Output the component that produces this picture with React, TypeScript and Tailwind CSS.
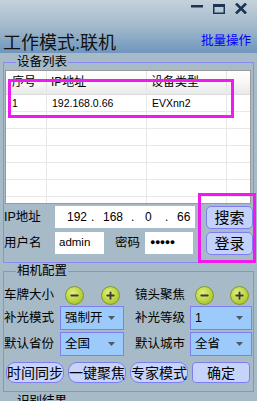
import { Minus, Plus } from "lucide-react"

function CircleBtn({ kind }: { kind: "minus" | "plus" }) {
  return (
    <div className="w-[19px] h-[19px] rounded-full border border-[#7f9a22] bg-[radial-gradient(circle_at_40%_35%,#e4f07c,#b6d13a_60%,#94b322)] flex items-center justify-center shrink-0">
      {kind === "minus" ? (
        <Minus className="w-[11px] h-[11px] text-[#3a3a3a]" strokeWidth={4} />
      ) : (
        <Plus className="w-[11px] h-[11px] text-[#3a3a3a]" strokeWidth={4} />
      )}
    </div>
  )
}

function Select({ value, className }: { value: string; className: string }) {
  return (
    <div
      className={`h-[24px] bg-[#9ccbfb] border border-[#7e7ef0] flex items-center justify-between pl-[4px] pr-[8px] text-[12.5px] text-black ${className}`}
    >
      <span>{value}</span>
      <svg width="7" height="4" viewBox="0 0 7 4">
        <path d="M0 0h7L3.5 4z" fill="#4a5a6a" />
      </svg>
    </div>
  )
}

export default function App() {
  const rows = Array.from({ length: 7 })

  return (
    <div className="relative w-[257px] h-[401px] overflow-hidden bg-[#a7bac8] font-['Liberation_Sans','Noto_Sans_CJK_SC',sans-serif] text-black">
      {/* Title area */}
      <div className="h-[53px] flex flex-col bg-linear-to-b from-[#c5d2db] via-[#a2b9cc] to-[#6f96bd]">
        <div className="h-[16px] flex items-start justify-end pr-[10px] pt-[3px] gap-[10px]">
          <svg width="12" height="11" viewBox="0 0 12 11">
            <rect x="0" y="2" width="12" height="2.5" fill="#1c3455" />
          </svg>
          <svg width="12" height="10" viewBox="0 0 12 10" className="mt-[1px]">
            <rect x="0.75" y="0.75" width="10.5" height="8.5" fill="none" stroke="#1c3455" strokeWidth="1.5" />
            <rect x="0" y="0" width="12" height="3" fill="#1c3455" />
          </svg>
          <svg width="12" height="11" viewBox="0 0 12 11">
            <path d="M1 0.5L11 10.5M11 0.5L1 10.5" stroke="#1c3455" strokeWidth="2.6" />
          </svg>
        </div>
        <div className="flex-1 flex items-end justify-between pl-[3px] pr-[6px] pb-[1px]">
          <span className="text-[18px] leading-[18px] text-[#111]">工作模式:联机</span>
          <span className="text-[12.5px] leading-[13px] text-[#0000ff] mb-[4px]">批量操作</span>
        </div>
      </div>

      {/* 设备列表 */}
      <fieldset className="ml-[3px] mt-[2px] w-[251px] border border-[#8a8af2] pb-[7px]">
        <legend className="ml-[12px] px-[1px] text-[12.5px] leading-[15px]">设备列表</legend>
        <div className="ml-[1px] w-[246px] h-[134px] border border-[#9a9a9a] bg-white overflow-hidden">
          <div className="h-[24px] flex border-b border-[#dcdcdc] bg-linear-to-b from-white via-[#f7f7f7] to-[#e9e9e9] text-[12px] items-end pb-[3px]">
            <div className="w-[41px] pl-[6px] border-r border-[#e2e2e2] h-full flex items-end">序号</div>
            <div className="w-[100px] pl-[4px] border-r border-[#e2e2e2] h-full flex items-end">IP地址</div>
            <div className="w-[80px] pl-[4px] border-r border-[#e2e2e2] h-full flex items-end">设备类型</div>
            <div className="flex-1" />
          </div>
          {rows.map((_, i) => (
            <div key={i} className="h-[17px] flex border-b border-[#e8e8e8] text-[10.5px] leading-[16px]">
              <div className="w-[41px] pl-[6px] border-r border-[#e8e8e8]">{i === 0 ? "1" : ""}</div>
              <div className="w-[100px] pl-[5px] border-r border-[#e8e8e8]">{i === 0 ? "192.168.0.66" : ""}</div>
              <div className="w-[80px] pl-[5px] border-r border-[#e8e8e8]">{i === 0 ? "EVXnn2" : ""}</div>
              <div className="flex-1" />
            </div>
          ))}
        </div>

        <div className="mt-[2px] flex">
          <div className="w-[195px] flex flex-col gap-[4px]">
            <div className="h-[22px] flex items-center">
              <span className="w-[51px] text-[12.5px]">IP地址</span>
              <div className="w-[140px] h-[22px] bg-white flex items-center text-[12px] pl-[12px] pr-[4px]">
                <span className="w-[24px]">192</span>
                <span className="w-[12px]">.</span>
                <span className="w-[28px]">168</span>
                <span className="w-[14px]">.</span>
                <span className="w-[20px]">0</span>
                <span className="w-[12px]">.</span>
                <span>66</span>
              </div>
            </div>
            <div className="h-[22px] flex items-center">
              <span className="w-[51px] text-[12.5px]">用户名</span>
              <div className="w-[49px] h-[22px] bg-white flex items-center pl-[4px] text-[11.5px]">admin</div>
              <span className="ml-[11px] w-[30px] text-[12.5px]">密码</span>
              <div className="w-[48px] h-[22px] bg-white flex items-center pl-[5px] text-[9px] tracking-[-0.5px]">●●●●●</div>
            </div>
          </div>
          <div className="ml-[7px] w-[47px] flex flex-col gap-[3px]">
            <button className="h-[23px] rounded-[5px] border border-[#7e7ef0] bg-[#c2d2fc] text-[15px] leading-[20px]">搜索</button>
            <button className="h-[23px] rounded-[5px] border border-[#7e7ef0] bg-[#c2d2fc] text-[15px] leading-[20px]">登录</button>
          </div>
        </div>
      </fieldset>

      {/* 相机配置 */}
      <fieldset className="ml-[3px] mt-[1px] w-[251px] border border-[#8a8af2] pb-[8px]">
        <legend className="ml-[12px] px-[1px] text-[12.5px] leading-[15px]">相机配置</legend>
        <div className="mt-[6px] h-[20px] flex items-center">
          <span className="w-[56px] text-[12.5px]">车牌大小</span>
          <div className="ml-[5px]"><CircleBtn kind="minus" /></div>
          <div className="ml-[17px]"><CircleBtn kind="plus" /></div>
          <span className="ml-[15px] w-[60px] text-[12.5px]">镜头聚焦</span>
          <CircleBtn kind="minus" />
          <div className="ml-[16px]"><CircleBtn kind="plus" /></div>
        </div>
        <div className="mt-[1px] flex items-center">
          <span className="w-[56px] text-[12.5px]">补光模式</span>
          <Select value="强制开" className="w-[64px]" />
          <span className="ml-[11px] w-[55px] text-[12.5px]">补光等级</span>
          <Select value="1" className="w-[62px]" />
        </div>
        <div className="mt-[2px] flex items-center">
          <span className="w-[56px] text-[12.5px]">默认省份</span>
          <Select value="全国" className="w-[64px]" />
          <span className="ml-[11px] w-[55px] text-[12.5px]">默认城市</span>
          <Select value="全省" className="w-[62px]" />
        </div>
        <div className="mt-[6px] ml-[2px] flex gap-[4px]">
          <button className="w-[58px] h-[21px] rounded-[9px] border border-[#7e7ef0] bg-[#c6d3fb] text-[14px] leading-[18px]">时间同步</button>
          <button className="w-[58px] h-[21px] rounded-[9px] border border-[#7e7ef0] bg-[#c6d3fb] text-[14px] leading-[18px]">一键聚焦</button>
          <button className="w-[58px] h-[21px] rounded-[9px] border border-[#7e7ef0] bg-[#c6d3fb] text-[14px] leading-[18px]">专家模式</button>
          <button className="w-[58px] h-[21px] rounded-[4px] border border-[#7e7ef0] bg-[#c6d3fb] text-[14px] leading-[18px]">确定</button>
        </div>
      </fieldset>

      {/* 识别结果 */}
      <fieldset className="ml-[3px] mt-[2px] w-[251px] h-[40px] border border-[#8a8af2]">
        <legend className="ml-[12px] px-[1px] text-[12.5px] leading-[15px]">识别结果</legend>
      </fieldset>

      {/* annotation boxes */}
      <div className="absolute left-[8px] top-[79px] w-[226px] h-[39px] border-[3px] border-[#f01af0]" />
      <div className="absolute left-[198px] top-[193px] w-[58px] h-[70px] border-[3px] border-[#f01af0]" />
    </div>
  )
}
